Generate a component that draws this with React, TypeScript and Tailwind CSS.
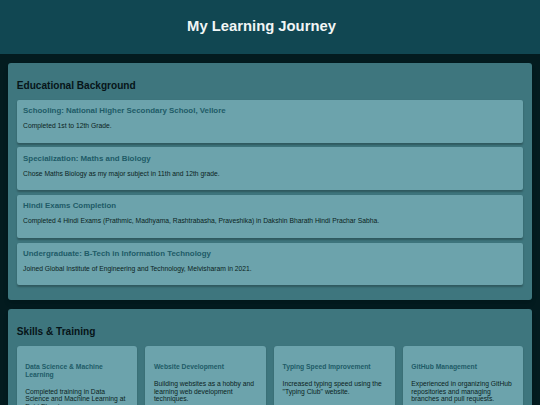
const education = [
	{
		title: "Schooling: National Higher Secondary School, Vellore",
		text: "Completed 1st to 12th Grade.",
	},
	{
		title: "Specialization: Maths and Biology",
		text: "Chose Maths Biology as my major subject in 11th and 12th grade.",
	},
	{
		title: "Hindi Exams Completion",
		text: "Completed 4 Hindi Exams (Prathmic, Madhyama, Rashtrabasha, Praveshika) in Dakshin Bharath Hindi Prachar Sabha.",
	},
	{
		title: "Undergraduate: B-Tech in Information Technology",
		text: "Joined Global Institute of Engineering and Technology, Melvisharam in 2021.",
	},
];

const skills = [
	{
		title: "Data Science & Machine Learning",
		text: "Completed training in Data Science and Machine Learning at Entri Elevate.",
	},
	{
		title: "Website Development",
		text: "Building websites as a hobby and learning web development techniques.",
	},
	{
		title: "Typing Speed Improvement",
		text: 'Increased typing speed using the "Typing Club" website.',
	},
	{
		title: "GitHub Management",
		text: "Experienced in organizing GitHub repositories and managing branches and pull requests.",
	},
];

export default function App() {
	return (
		<div className="min-h-screen bg-[#031b1f] pb-4 font-['Liberation_Sans',Arial,sans-serif] leading-[1.15]">
			<header className="flex h-[54px] items-center justify-center bg-[#114752] pr-[17px]">
				<h1 className="text-[14.8px] font-bold text-[#f1f6f6]">My Learning Journey</h1>
			</header>

			<section className="mx-[8.4px] mt-[9px] rounded-[3px] bg-[#3e767e] px-[8.4px] pt-[8.4px] pb-[15px] shadow-md">
				<h2 className="my-[8.4px] text-[10.1px] font-bold text-[#061418]">Educational Background</h2>
				<div className="flex flex-col gap-[4.7px]">
					{education.map((item) => (
						<div
							key={item.title}
							className="rounded-[2px] bg-[#6ca3ac] px-[6.3px] pt-[6.3px] pb-[6.4px] shadow-[0_1.5px_2px_rgba(0,0,0,0.25)]"
						>
							<h3 className="mb-[7px] text-[7.9px] font-bold text-[#205b67]">{item.title}</h3>
							<p className="mb-[6.4px] text-[6.75px] text-[#0b1f22]">{item.text}</p>
						</div>
					))}
				</div>
			</section>

			<section className="mx-[8.4px] mt-[9px] rounded-[3px] bg-[#3e767e] px-[8.4px] pt-[8.4px] pb-[8.4px] shadow-md">
				<h2 className="my-[8.4px] text-[10.1px] font-bold text-[#061418]">Skills &amp; Training</h2>
				<div className="grid grid-cols-4 gap-[8.4px]">
					{skills.map((skill) => (
						<div
							key={skill.title}
							className="rounded-[3px] bg-[#6ca3ac] px-[8.4px] pt-[8.4px] pb-[8.4px] shadow-[0_1.5px_2px_rgba(0,0,0,0.2)]"
						>
							<h4 className="mt-[8.4px] mb-[9px] text-[6.75px] font-bold text-[#205b67]">{skill.title}</h4>
							<p className="mb-[6.75px] text-[6.75px] text-[#0b1f22]">{skill.text}</p>
						</div>
					))}
				</div>
			</section>
		</div>
	);
}
